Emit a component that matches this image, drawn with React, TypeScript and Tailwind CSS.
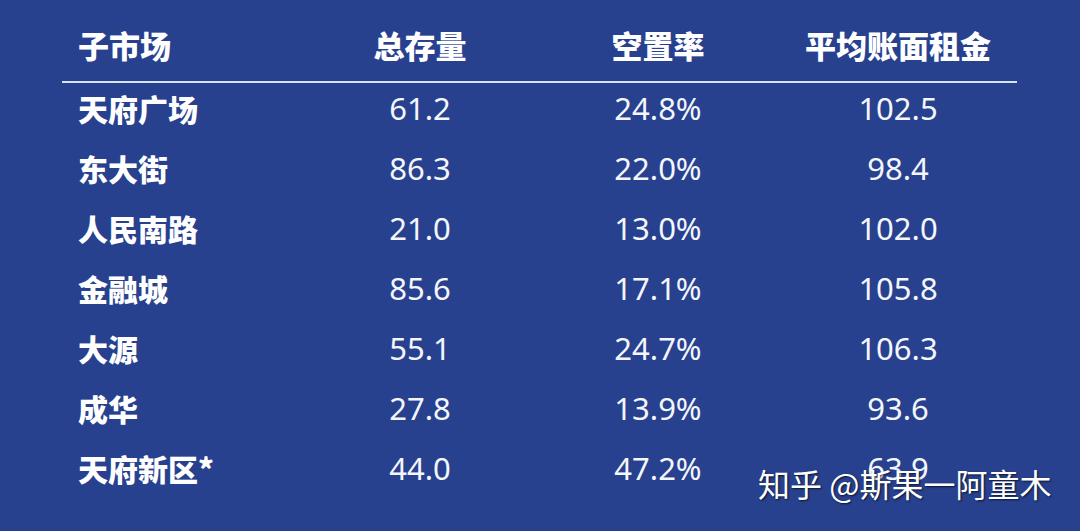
const rows = [
  { name: "天府广场", stock: "61.2", vacancy: "24.8%", rent: "102.5" },
  { name: "东大街", stock: "86.3", vacancy: "22.0%", rent: "98.4" },
  { name: "人民南路", stock: "21.0", vacancy: "13.0%", rent: "102.0" },
  { name: "金融城", stock: "85.6", vacancy: "17.1%", rent: "105.8" },
  { name: "大源", stock: "55.1", vacancy: "24.7%", rent: "106.3" },
  { name: "成华", stock: "27.8", vacancy: "13.9%", rent: "93.6" },
  { name: "天府新区*", stock: "44.0", vacancy: "47.2%", rent: "63.9" },
];

const cjk = { fontFamily: '"Noto Sans CJK SC", "Noto Sans", sans-serif' };
const num = { fontFamily: '"Noto Sans", "Noto Sans CJK SC", sans-serif' };

export default function App() {
  return (
    <div className="relative w-[1080px] h-[531px] overflow-hidden bg-[#27418f] text-white">
      <div className="pt-[15px] pl-[62px]">
        <div className="w-[958px]">
          <div
            className="grid grid-cols-[238px_240px_236px_244px] h-[60px] items-center text-[31px] font-black"
            style={cjk}
          >
            <div className="pl-4">子市场</div>
            <div className="text-center">总存量</div>
            <div className="text-center">空置率</div>
            <div className="text-center">平均账面租金</div>
          </div>
          <div className="mt-[6px] w-[955px] h-[2px] bg-[#d3e6f7]" />
          {rows.map((r) => (
            <div
              key={r.name}
              className="grid grid-cols-[238px_240px_236px_244px] h-[60px] pb-[10px] items-center text-[31px]"
            >
              <div className="pl-4 text-[30px] font-black" style={cjk}>
                {r.name}
              </div>
              <div className="text-center text-[#f4f6fb]" style={num}>
                {r.stock}
              </div>
              <div className="text-center text-[#f4f6fb]" style={num}>
                {r.vacancy}
              </div>
              <div className="text-center text-[#f4f6fb]" style={num}>
                {r.rent}
              </div>
            </div>
          ))}
        </div>
      </div>
      <div
        className="absolute left-[758px] top-[463px] text-[32px] leading-[40px] text-white [text-shadow:1px_1px_2px_rgba(0,0,0,0.7)]"
        style={cjk}
      >
        知乎 @斯果一阿童木
      </div>
    </div>
  );
}
